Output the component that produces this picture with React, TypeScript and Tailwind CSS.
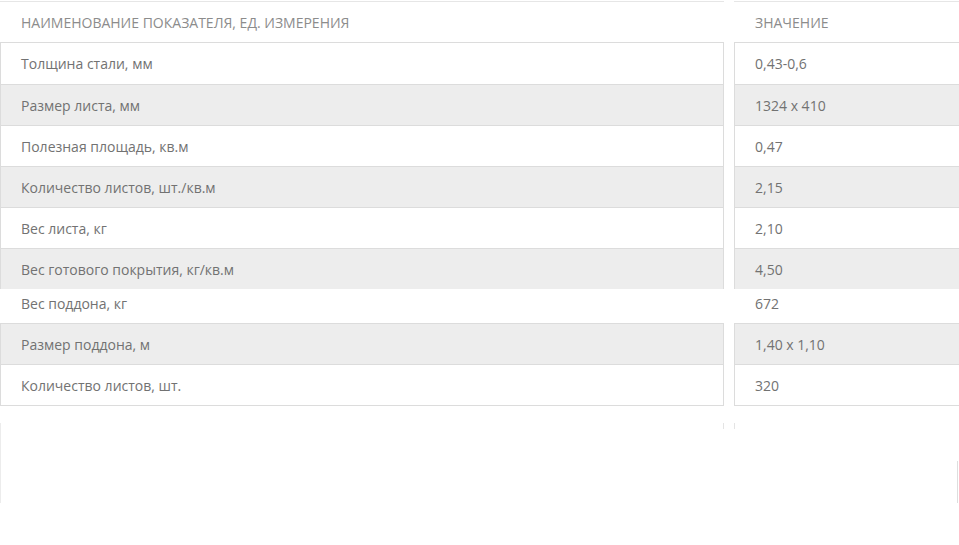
import React from 'react';

type Row = { name: string; value: string };

const rows: Row[] = [
  { name: 'Толщина стали, мм', value: '0,43-0,6' },
  { name: 'Размер листа, мм', value: '1324 x 410' },
  { name: 'Полезная площадь, кв.м', value: '0,47' },
  { name: 'Количество листов, шт./кв.м', value: '2,15' },
  { name: 'Вес листа, кг', value: '2,10' },
  { name: 'Вес готового покрытия, кг/кв.м', value: '4,50' },
  { name: 'Вес поддона, кг', value: '672' },
  { name: 'Размер поддона, м', value: '1,40 x 1,10' },
  { name: 'Количество листов, шт.', value: '320' },
];

// row box classes, written out per index so the borders land on the reference lines
const rowClass = [
  'h-[43px] border-y border-x bg-white pl-5',
  'h-[41px] border-b border-x bg-[#ededed] pl-5',
  'h-[41px] border-b border-x bg-white pl-5',
  'h-[41px] border-b border-x bg-[#ededed] pl-5',
  'h-[41px] border-b border-x bg-white pl-5',
  'h-[40px] border-x bg-[#ededed] pl-5',
  'h-[34px] bg-white pb-[6px] pl-[21px]',
  'h-[42px] border-y border-x bg-[#ededed] pl-5',
  'h-[41px] border-b border-x bg-white pl-5',
];

const Column = ({ title, field, className }: { title: string; field: 'name' | 'value'; className: string }) => (
  <div className={className}>
    <div className="mt-px h-[41px] border-t border-[#e6e6e6] flex items-center pl-[21px] text-[14px] uppercase text-[#8c8c8c]">
      {title}
    </div>
    {rows.map((row, i) => (
      <div
        key={row.name}
        className={`${rowClass[i]} border-[#dcdcdc] flex items-center text-[14px] text-[#727272]`}
      >
        {row[field]}
      </div>
    ))}
  </div>
);

export default function App() {
  return (
    <div className="w-[959px] h-[545px] overflow-hidden bg-white" style={{ fontFamily: '"Open Sans", "Liberation Sans", sans-serif' }}>
      <div className="flex gap-[10px]">
        <Column title="Наименование показателя, ед. измерения" field="name" className="w-[724px] shrink-0" />
        <Column title="Значение" field="value" className="w-[240px] shrink-0" />
      </div>

      {/* faint leftovers of the block below the table */}
      <div className="flex mt-[17px]">
        <div className="w-[724px] shrink-0 flex justify-end">
          <div className="w-px h-[6px] bg-[#e4e4e4]" />
        </div>
        <div className="w-[10px] shrink-0" />
        <div className="w-px h-[6px] bg-[#e4e4e4]" />
      </div>
      <div className="flex justify-between mt-[-6px]">
        <div className="w-px h-[80px] bg-[#ececec]" />
        <div className="w-px h-[42px] mt-[38px] mr-px bg-[#dedede]" />
      </div>
    </div>
  );
}
